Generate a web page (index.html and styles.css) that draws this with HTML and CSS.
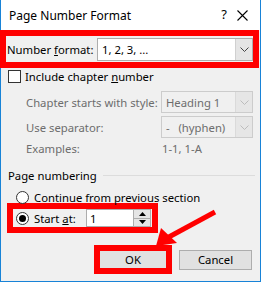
FILE: index.html
```html
<!DOCTYPE html>
<html lang="en">
<head>
    <meta charset="UTF-8">
    <title>Page Number Format</title>
    <link rel="stylesheet" href="styles.css">
</head>
<body>
    <div class="dialog">
        <div class="titlebar">
            <span class="title">Page Number Format</span>
            <span class="help">?</span>
            <svg class="close" width="11" height="11" viewBox="0 0 11 11">
                <path d="M0.5 0.5 L10.5 10.5 M10.5 0.5 L0.5 10.5" stroke="#000" stroke-width="1.1" fill="none"/>
            </svg>
        </div>

        <div class="mark format-row">
            <span class="format-label">Number <u>f</u>ormat:</span>
            <div class="combo combo-main">
                <span class="combo-text">1, 2, 3, ...</span>
                <span class="combo-btn">
                    <svg width="9" height="5" viewBox="0 0 9 5"><path d="M0.5 0.5 L4.5 4.5 L8.5 0.5" stroke="#444" fill="none"/></svg>
                </span>
            </div>
        </div>

        <div class="row check-row">
            <span class="checkbox"></span>
            <span>Include chapter <u>n</u>umber</span>
        </div>

        <div class="row field-row first-field">
            <span class="field-label">Chapter starts with style:</span>
            <div class="combo combo-off">
                <span class="combo-text">Heading 1</span>
                <span class="combo-btn">
                    <svg width="9" height="5" viewBox="0 0 9 5"><path d="M0.5 0.5 L4.5 4.5 L8.5 0.5" stroke="#bcbcbc" fill="none"/></svg>
                </span>
            </div>
        </div>
        <div class="row field-row">
            <span class="field-label">Use separator:</span>
            <div class="combo combo-off">
                <span class="combo-text">-&nbsp;&nbsp;&nbsp;(hyphen)</span>
                <span class="combo-btn">
                    <svg width="9" height="5" viewBox="0 0 9 5"><path d="M0.5 0.5 L4.5 4.5 L8.5 0.5" stroke="#bcbcbc" fill="none"/></svg>
                </span>
            </div>
        </div>
        <div class="row examples-row">
            <span class="field-label">Examples:</span>
            <span class="example-value">1-1, 1-A</span>
        </div>

        <div class="row group-head">
            <span>Page numbering</span>
            <span class="group-line"></span>
        </div>
        <div class="row radio-row">
            <span class="radio"></span>
            <span>Continue from previous section</span>
        </div>
        <div class="mark start-row">
            <span class="radio checked"></span>
            <span class="start-label">Start <u>a</u>t:</span>
            <div class="spin">
                <span class="spin-text">1</span>
                <span class="spin-btns">
                    <span class="spin-btn"><svg width="7" height="4" viewBox="0 0 7 4"><path d="M0 4 L3.5 0 L7 4 Z" fill="#000"/></svg></span>
                    <span class="spin-btn"><svg width="7" height="4" viewBox="0 0 7 4"><path d="M0 0 L7 0 L3.5 4 Z" fill="#000"/></svg></span>
                </span>
            </div>
        </div>

        <div class="buttons">
            <div class="mark ok-mark"><span class="button ok">OK</span></div>
            <span class="button">Cancel</span>
        </div>

        <!-- flecha vermelha apontando para o OK -->
        <svg class="arrow" width="261" height="282" viewBox="0 0 261 282">
            <line x1="215" y1="212" x2="167" y2="238" stroke="#f00" stroke-width="5"/>
            <polygon points="156,246 161,228 177,243" fill="#f00"/>
        </svg>
    </div>
</body>
</html>
```

FILE: styles.css
```css
body {
    margin: 0;
    font-family: "Noto Sans", "Open Sans", sans-serif;
    font-size: 11.3px;
    color: #000;
}
.dialog {
    position: relative;
    width: 261px;
    height: 282px;
    box-sizing: border-box;
    border: 1px solid #1883d7;
    border-top: none;
    background-color: #f0f0f0;
}
.titlebar {
    height: 30px;
    background-color: #fff;
    display: flex;
    align-items: center;
    padding-left: 8px;
}
.title {
    font-size: 12px;
    flex: 1;
}
.help {
    font-size: 13px;
    margin-right: 10px;
    margin-top: -2px;
}
.close {
    margin-right: 12px;
}
.mark {
    border: 6px solid #f00;
    box-sizing: border-box;
}
.format-row {
    height: 38px;
    margin: 0 1px 0 -1px;
    display: flex;
    align-items: center;
    padding-left: 1px;
}
.format-label {
    width: 90px;
}
.combo {
    display: flex;
    box-sizing: border-box;
    border: 1px solid #adadad;
    background-color: #fff;
}
.combo-main {
    width: 156px;
    height: 23px;
}
.combo-text {
    flex: 1;
    padding-left: 4px;
    display: flex;
    align-items: center;
}
.combo-btn {
    width: 16px;
    display: flex;
    align-items: center;
    justify-content: center;
    background-color: #e5e5e5;
    border-left: 1px solid #d0d0d0;
}
.row {
    display: flex;
    align-items: center;
    height: 16px;
}
.check-row {
    margin-top: 0;
    padding-left: 7px;
}
.checkbox {
    width: 13px;
    height: 13px;
    box-sizing: border-box;
    border: 1px solid #333;
    background-color: #fff;
    margin-right: 4px;
}
.field-row {
    height: 22px;
    margin-top: 3px;
    padding-left: 25px;
    color: #6d6d6d;
}
.first-field {
    margin-top: 7px;
}
.field-label {
    width: 135px;
}
.combo-off {
    width: 92px;
    height: 22px;
    background-color: #f0f0f0;
    border-color: #cccccc;
    color: #6d6d6d;
}
.combo-off .combo-btn {
    background-color: #e6e6e6;
    border-left: 1px solid #dadada;
}
.examples-row {
    margin-top: 2px;
    padding-left: 25px;
    color: #6d6d6d;
}
.example-value {
    padding-left: 1px;
}
.group-head {
    margin-top: 11px;
    padding-left: 7px;
}
.group-line {
    flex: 1;
    height: 1px;
    background-color: #dcdcdc;
    margin: 0 5px 0 6px;
}
.radio-row {
    margin-top: 6px;
    padding-left: 15px;
}
.radio {
    width: 13px;
    height: 13px;
    box-sizing: border-box;
    border: 1px solid #333;
    border-radius: 50%;
    background-color: #fff;
    margin-right: 5px;
    display: flex;
    align-items: center;
    justify-content: center;
}
.radio.checked::after {
    content: "";
    width: 7px;
    height: 7px;
    border-radius: 50%;
    background-color: #000;
}
.start-row {
    width: 151px;
    height: 30px;
    margin: -2px 0 0 6px;
    display: flex;
    align-items: center;
    padding-left: 3px;
}
.start-label {
    width: 52px;
}
.spin {
    width: 65px;
    height: 18px;
    box-sizing: border-box;
    border: 1px solid #adadad;
    background-color: #fff;
    display: flex;
}
.spin-text {
    flex: 1;
    padding-left: 3px;
    display: flex;
    align-items: center;
}
.spin-btns {
    width: 16px;
    display: flex;
    flex-direction: column;
    border-left: 1px solid #adadad;
}
.spin-btn {
    flex: 1;
    display: flex;
    align-items: center;
    justify-content: center;
    background-color: #e5e5e5;
}
.spin-btn + .spin-btn {
    border-top: 1px solid #adadad;
}
.buttons {
    display: flex;
    justify-content: flex-end;
    align-items: center;
    margin-top: 12px;
    padding-right: 8px;
}
.ok-mark {
    width: 78px;
    height: 29px;
    margin-right: 7px;
    display: flex;
}
.button {
    width: 73px;
    height: 20px;
    box-sizing: border-box;
    border: 1px solid #adadad;
    background-color: #e1e1e1;
    display: flex;
    align-items: center;
    justify-content: center;
}
.ok {
    flex: 1;
    height: auto;
    border: none;
    padding-bottom: 1px;
}
.arrow {
    position: absolute;
    top: 0;
    left: -1px;
    pointer-events: none;
}
```
